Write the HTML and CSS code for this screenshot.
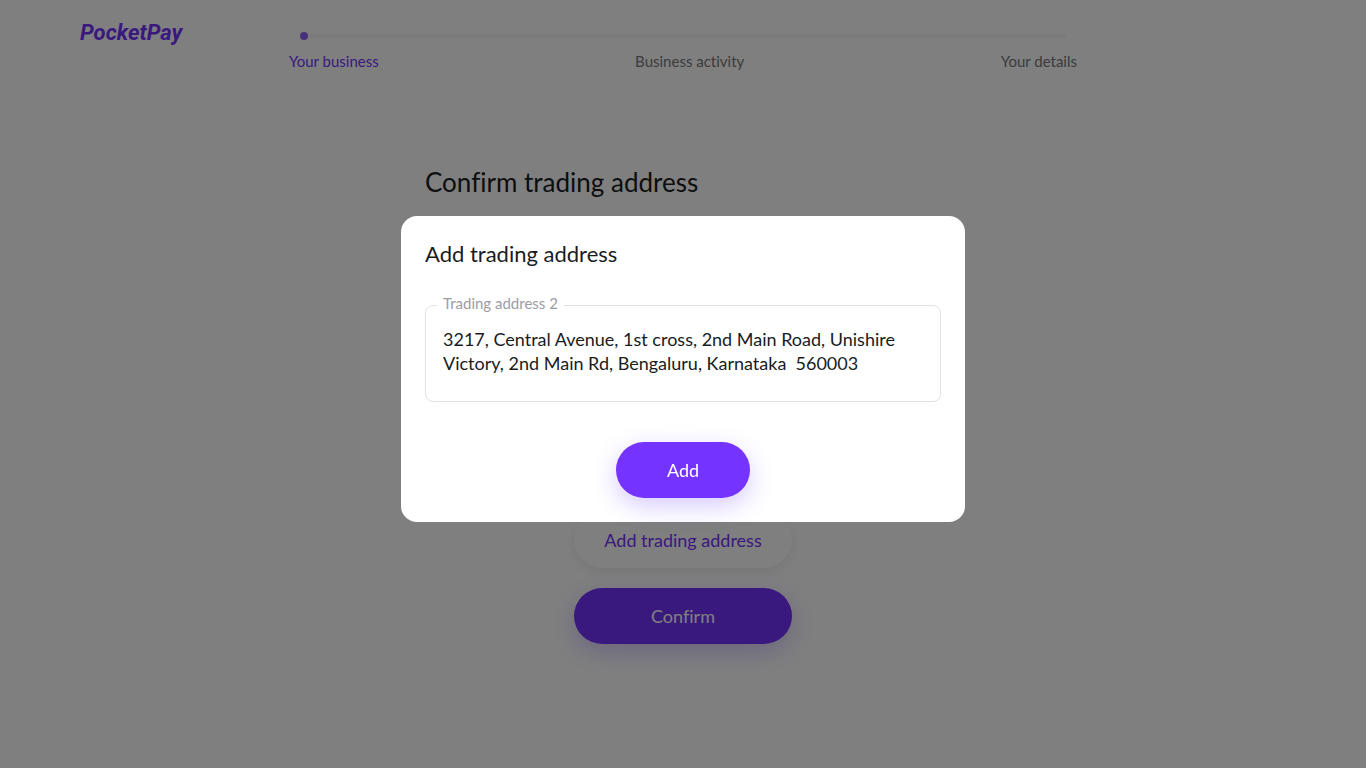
FILE: index.html
```html
<!DOCTYPE html>
<html lang="en">
<head>
<meta charset="utf-8">
<meta name="viewport" content="width=device-width, initial-scale=1">
<title>PocketPay</title>
<link rel="stylesheet" href="styles.css">
</head>
<body>
<header class="header">
  <a class="logo" href="#">PocketPay</a>
  <nav class="stepper" aria-label="Progress">
    <div class="track"><span class="dot"></span></div>
    <ol class="steps">
      <li class="step step-active" aria-current="step">Your business</li>
      <li class="step">Business activity</li>
      <li class="step">Your details</li>
    </ol>
  </nav>
</header>
<main class="content">
  <h1 class="title">Confirm trading address</h1>
  <div class="actions">
    <button class="button button-light" type="button">Add trading address</button>
    <button class="button button-primary" type="button">Confirm</button>
  </div>
</main>
<div class="overlay">
  <form class="modal" role="dialog" aria-modal="true" aria-labelledby="modal-title">
    <h2 class="modal-title" id="modal-title">Add trading address</h2>
    <fieldset class="field">
      <legend class="field-legend"><label for="address">Trading address 2</label></legend>
      <textarea class="field-input" id="address" rows="2">3217, Central Avenue, 1st cross, 2nd Main Road, Unishire Victory, 2nd Main Rd, Bengaluru, Karnataka  560003</textarea>
    </fieldset>
    <button class="button button-primary modal-button" type="button">Add</button>
  </form>
</div>
</body>
</html>
```
FILE: styles.css
```css
* {
  box-sizing: border-box;
}

body {
  margin: 0;
  min-height: 100vh;
  background: #fff;
  color: #191c1f;
  font-family: Lato, "Noto Sans", sans-serif;
  font-size: 18px;
  font-variant-ligatures: none;
  line-height: 24px;
}

.header {
  display: grid;
  grid-template-columns: 1fr minmax(0, 788px) 1fr;
  padding-top: 20px;
}

.logo {
  padding-left: 80px;
  color: #7433ff;
  font-family: Roboto, "Liberation Sans", sans-serif;
  font-size: 22px;
  font-style: italic;
  font-weight: 700;
  line-height: 26px;
  text-decoration: none;
}

.stepper {
  padding-top: 14px;
}

.track {
  display: flex;
  align-items: center;
  height: 4px;
  margin: 0 11px;
  border-radius: 2px;
  background: #f7f7f7;
}

.dot {
  width: 8px;
  height: 8px;
  border-radius: 50%;
  background: #9061fa;
}

.steps {
  display: flex;
  justify-content: space-between;
  margin: 11px 0 0;
  padding: 0;
  list-style: none;
}

.step {
  color: #75787b;
  font-size: 15px;
}

.step-active {
  color: #7433ff;
}

.content {
  max-width: 516px;
  margin: 0 auto;
  padding-top: 93px;
}

.title {
  margin: 0;
  font-size: 26px;
  font-weight: 400;
  line-height: 32px;
}

.actions {
  display: grid;
  justify-content: center;
  gap: 20px;
  padding-top: 314px;
}

.button {
  height: 56px;
  padding: 0 30px;
  border: 0;
  border-radius: 28px;
  font: inherit;
  font-variant-ligatures: none;
  cursor: pointer;
}

.button-light {
  background: #fff;
  color: #7433ff;
  box-shadow: 0 4px 12px rgba(0, 0, 0, 0.08);
}

.button-primary {
  background: #7433ff;
  color: #fff;
  box-shadow: 0 8px 24px rgba(95, 51, 255, 0.25);
}

.overlay {
  position: fixed;
  inset: 0;
  display: flex;
  align-items: center;
  justify-content: center;
  padding-bottom: 30px;
  background: rgba(0, 0, 0, 0.5);
}

.modal {
  display: flex;
  flex-direction: column;
  width: 100%;
  max-width: 564px;
  padding: 24px;
  border-radius: 16px;
  background: #fff;
}

.modal-title {
  margin: 0 0 29px;
  font-size: 22px;
  font-weight: 400;
  line-height: 28px;
}

.field {
  min-width: 0;
  margin: 0 0 40px;
  padding: 14px 17px;
  border: 1px solid #e2e2e6;
  border-radius: 8px;
}

.field-legend {
  height: 16px;
  margin-left: -6px;
  padding: 0 6px;
  color: #9c9ca2;
  font-size: 15px;
  line-height: 12px;
}

.field-input {
  display: block;
  width: 100%;
  height: 60px;
  padding: 0;
  border: 0;
  outline: 0;
  background: transparent;
  color: inherit;
  font: inherit;
  resize: none;
}

.modal-button {
  align-self: center;
  padding: 0 51px;
}
```
